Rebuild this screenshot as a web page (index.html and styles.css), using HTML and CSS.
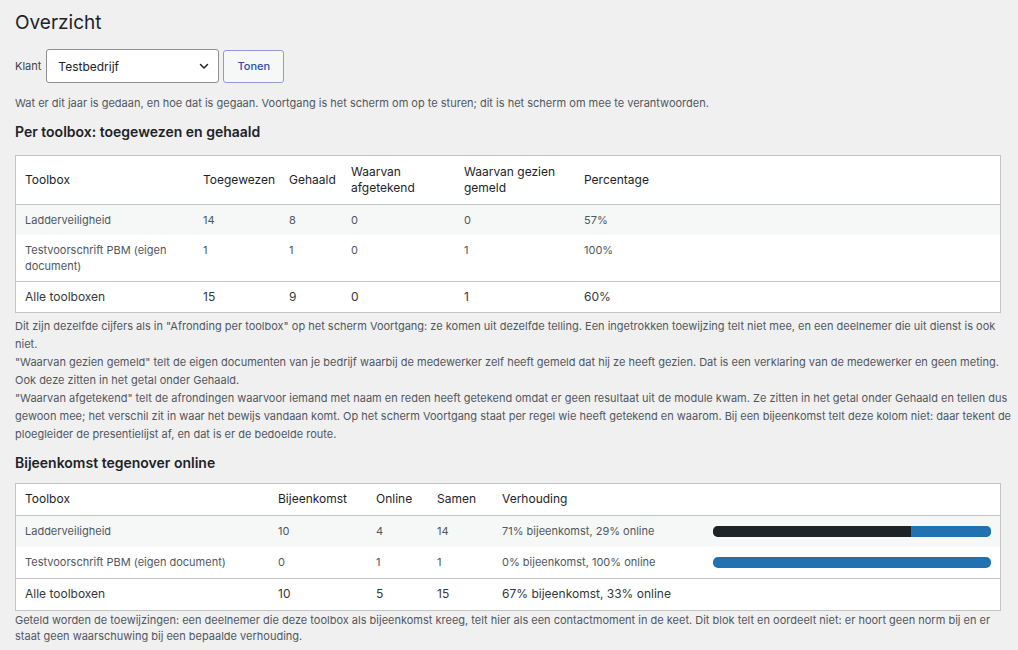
FILE: index.html
```html
<!DOCTYPE html>
<html lang="nl">
<head>
<meta charset="utf-8">
<title>Overzicht</title>
<link rel="stylesheet" href="styles.css">
</head>
<body>
<div class="wrap">
  <h1 class="title">Overzicht</h1>
  <form class="filter">
    <label class="filter-label" for="klant">Klant</label>
    <div class="select" id="klant">
      <span class="select-value">Testbedrijf</span>
      <svg class="select-arrow" width="12" height="12" viewBox="0 0 12 12"><path d="M2.5 4.5 L6 8 L9.5 4.5" fill="none" stroke="#1d2327" stroke-width="1.5" stroke-linecap="round" stroke-linejoin="round"/></svg>
    </div>
    <button type="button" class="btn">Tonen</button>
  </form>
  <p class="desc">Wat er dit jaar is gedaan, en hoe dat is gegaan. Voortgang is het scherm om op te sturen; dit is het scherm om mee te verantwoorden.</p>

  <h2 class="section">Per toolbox: toegewezen en gehaald</h2>
  <table class="grid grid-a">
    <thead>
      <tr>
        <th class="a1">Toolbox</th>
        <th class="a2">Toegewezen</th>
        <th class="a3">Gehaald</th>
        <th class="a4">Waarvan afgetekend</th>
        <th class="a5">Waarvan gezien gemeld</th>
        <th class="a6">Percentage</th>
      </tr>
    </thead>
    <tbody>
      <tr class="alt">
        <td>Ladderveiligheid</td><td>14</td><td>8</td><td>0</td><td>0</td><td>57%</td>
      </tr>
      <tr>
        <td>Testvoorschrift PBM (eigen document)</td><td>1</td><td>1</td><td>0</td><td>1</td><td>100%</td>
      </tr>
      <tr class="total">
        <td>Alle toolboxen</td><td>15</td><td>9</td><td>0</td><td>1</td><td>60%</td>
      </tr>
    </tbody>
  </table>
  <div class="notes">
    <p class="note">Dit zijn dezelfde cijfers als in "Afronding per toolbox" op het scherm Voortgang: ze komen uit dezelfde telling. Een ingetrokken toewijzing telt niet mee, en een deelnemer die uit dienst is ook niet.</p>
    <p class="note">"Waarvan gezien gemeld" telt de eigen documenten van je bedrijf waarbij de medewerker zelf heeft gemeld dat hij ze heeft gezien. Dat is een verklaring van de medewerker en geen meting. Ook deze zitten in het getal onder Gehaald.</p>
    <p class="note">"Waarvan afgetekend" telt de afrondingen waarvoor iemand met naam en reden heeft getekend omdat er geen resultaat uit de module kwam. Ze zitten in het getal onder Gehaald en tellen dus gewoon mee; het verschil zit in waar het bewijs vandaan komt. Op het scherm Voortgang staat per regel wie heeft getekend en waarom. Bij een bijeenkomst telt deze kolom niet: daar tekent de ploegleider de presentielijst af, en dat is er de bedoelde route.</p>
  </div>

  <h2 class="section section-b">Bijeenkomst tegenover online</h2>
  <table class="grid grid-b">
    <thead>
      <tr>
        <th class="b1">Toolbox</th>
        <th class="b2">Bijeenkomst</th>
        <th class="b3">Online</th>
        <th class="b4">Samen</th>
        <th class="b5">Verhouding</th>
        <th class="b6"></th>
      </tr>
    </thead>
    <tbody>
      <tr class="alt">
        <td>Ladderveiligheid</td><td>10</td><td>4</td><td>14</td><td>71% bijeenkomst, 29% online</td>
        <td><div class="bar"><span class="bar-meet" style="width:71.4%"></span><span class="bar-online"></span></div></td>
      </tr>
      <tr>
        <td>Testvoorschrift PBM (eigen document)</td><td>0</td><td>1</td><td>1</td><td>0% bijeenkomst, 100% online</td>
        <td><div class="bar"><span class="bar-meet" style="width:0%"></span><span class="bar-online"></span></div></td>
      </tr>
      <tr class="total">
        <td>Alle toolboxen</td><td>10</td><td>5</td><td>15</td><td>67% bijeenkomst, 33% online</td><td></td>
      </tr>
    </tbody>
  </table>
  <div class="notes notes-last">
    <p class="note">Geteld worden de toewijzingen: een deelnemer die deze toolbox als bijeenkomst kreeg, telt hier als een contactmoment in de keet. Dit blok telt en oordeelt niet: er hoort geen norm bij en er staat geen waarschuwing bij een bepaalde verhouding.</p>
  </div>
</div>
</body>
</html>
```
FILE: styles.css
```css
html, body {
  margin: 0;
  padding: 0;
  background: #f0f0f1;
}
body {
  font-family: Inter, "Noto Sans", "Liberation Sans", sans-serif;
  font-size: 12px;
  font-weight: 400;
  color: #3c434a;
}
.wrap {
  padding: 0 17px 0 15px;
}
.title {
  margin: 0;
  padding: 11px 0 0;
  font-size: 19px;
  font-weight: 400;
  line-height: 24px;
  color: #1d2327;
}
.filter {
  display: flex;
  align-items: center;
  margin-top: 14px;
}
.filter-label {
  font-size: 11px;
  color: #3c434a;
  margin-right: 5px;
}
.select {
  width: 173px;
  height: 34px;
  box-sizing: border-box;
  border: 1px solid #8c8f94;
  border-radius: 3px;
  background: #fff;
  display: flex;
  align-items: center;
  justify-content: space-between;
  padding: 0 8px 0 11px;
  font-size: 12px;
  color: #1d2327;
}
.btn {
  margin-left: 4px;
  width: 61px;
  height: 33px;
  box-sizing: border-box;
  border: 1px solid #8e9ccf;
  border-radius: 3px;
  background: #f6f7f7;
  color: #2b4fae;
  font-family: inherit;
  font-size: 11px;
  font-weight: 500;
  padding: 0;
}
.desc {
  margin: 12px 0 0;
  font-size: 11px;
  line-height: 16px;
  color: #50575e;
}
.section {
  margin: 12px 0 14px;
  font-size: 14px;
  font-weight: 600;
  line-height: 18px;
  color: #1d2327;
}
.section-b {
  margin-top: 11px;
  margin-bottom: 11px;
}
.grid {
  width: 100%;
  border-collapse: collapse;
  background: #fff;
  border: 1px solid #c3c4c7;
  table-layout: fixed;
}
.grid th, .grid td {
  padding: 7px 9px;
  text-align: left;
  vertical-align: top;
  line-height: 16px;
}
.grid thead th {
  font-weight: 400;
  font-size: 12px;
  color: #1d2327;
  border-bottom: 1px solid #c3c4c7;
  vertical-align: middle;
}
.grid-a thead th {
  padding-top: 8px;
  padding-bottom: 8px;
}
.grid td {
  font-size: 11px;
  color: #50575e;
}
.grid tbody tr.alt {
  background: #f6f7f7;
}
.grid tr.total td {
  font-size: 12px;
  color: #32373c;
  border-top: 1px solid #c3c4c7;
}
.a1 { width: 160px; }
.a2 { width: 68px; }
.a3 { width: 44px; }
.a4 { width: 95px; }
.a5 { width: 102px; }
.b1 { width: 235px; }
.b2 { width: 80px; }
.b3 { width: 43px; }
.b4 { width: 47px; }
.b5 { width: 193px; }
.grid-b td, .grid-b th {
  vertical-align: middle;
}
.grid-b thead th,
.grid-b td {
  padding-top: 7px;
  padding-bottom: 8px;
}
.bar {
  display: flex;
  height: 11px;
  border-radius: 5px;
  overflow: hidden;
  background: #2271b1;
}
.bar-meet {
  display: block;
  background: #1d2327;
}
.bar-online {
  display: block;
  flex: 1;
  background: #2271b1;
}
.notes {
  margin: 4px -12px 0 0;
}
.notes-last {
  margin-top: 1px;
}
.note {
  margin: 0;
  font-size: 11px;
  line-height: 18px;
  color: #50575e;
}
.notes-last .note {
  line-height: 16px;
}
```
